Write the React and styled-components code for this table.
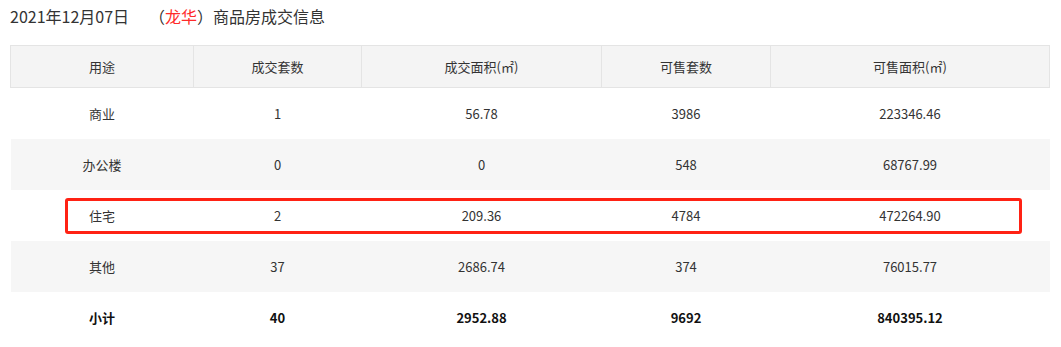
import React from 'react';
import styled, { createGlobalStyle } from 'styled-components';

const GlobalStyle = createGlobalStyle`
  body {
    margin: 0;
    background: #ffffff;
    font-family: 'Noto Sans CJK SC', 'Noto Sans', sans-serif;
    color: #333333;
  }
`;

const Page = styled.div`
  padding: 4px 12px 0 10px;
  width: 1061px;
  box-sizing: border-box;
`;

const Title = styled.h2`
  margin: 0;
  height: 24px;
  font-size: 16px;
  font-weight: 400;
  line-height: 24px;
  color: #333333;
  display: flex;
  align-items: center;
`;

const DateText = styled.span`
  margin-right: 20px;
`;

const District = styled.span`
  color: #ff2a2a;
`;

const TableWrap = styled.div`
  position: relative;
  margin-top: 17px;
`;

const Table = styled.table`
  width: 1039px;
  border-collapse: collapse;
  table-layout: fixed;
  font-size: 13px;
`;

const HeadCell = styled.th`
  height: 41px;
  background: #f4f4f4;
  border: 1px solid #e4e4e4;
  font-weight: 400;
  color: #333333;
  padding: 0;
`;

const Row = styled.tr`
  background: ${(p) => (p.$striped ? '#f6f6f6' : '#ffffff')};
`;

const Cell = styled.td`
  height: 51px;
  padding: 0;
  text-align: center;
  font-weight: ${(p) => (p.$bold ? 700 : 400)};
  color: ${(p) => (p.$bold ? '#111111' : '#333333')};
`;

const Highlight = styled.div`
  position: absolute;
  left: 55px;
  top: 153px;
  width: 957px;
  height: 36px;
  box-sizing: border-box;
  border: 3px solid #ff2214;
  border-radius: 3px;
  pointer-events: none;
`;

const columns = [
  { label: '用途', width: 183 },
  { label: '成交套数', width: 168 },
  { label: '成交面积(㎡)', width: 240 },
  { label: '可售套数', width: 169 },
  { label: '可售面积(㎡)', width: 279 },
];

const rows = [
  ['商业', '1', '56.78', '3986', '223346.46'],
  ['办公楼', '0', '0', '548', '68767.99'],
  ['住宅', '2', '209.36', '4784', '472264.90'],
  ['其他', '37', '2686.74', '374', '76015.77'],
];

const total = ['小计', '40', '2952.88', '9692', '840395.12'];

export default function App() {
  return (
    <Page>
      <GlobalStyle />
      <Title>
        <DateText>2021年12月07日</DateText>
        （<District>龙华</District>）商品房成交信息
      </Title>
      <TableWrap>
        <Table>
          <colgroup>
            {columns.map((c) => (
              <col key={c.label} style={{ width: c.width }} />
            ))}
          </colgroup>
          <thead>
            <tr>
              {columns.map((c) => (
                <HeadCell key={c.label}>{c.label}</HeadCell>
              ))}
            </tr>
          </thead>
          <tbody>
            {rows.map((r, i) => (
              <Row key={r[0]} $striped={i % 2 === 1}>
                {r.map((v, j) => (
                  <Cell key={j}>{v}</Cell>
                ))}
              </Row>
            ))}
            <Row>
              {total.map((v, j) => (
                <Cell key={j} $bold>{v}</Cell>
              ))}
            </Row>
          </tbody>
        </Table>
        <Highlight />
      </TableWrap>
    </Page>
  );
}
